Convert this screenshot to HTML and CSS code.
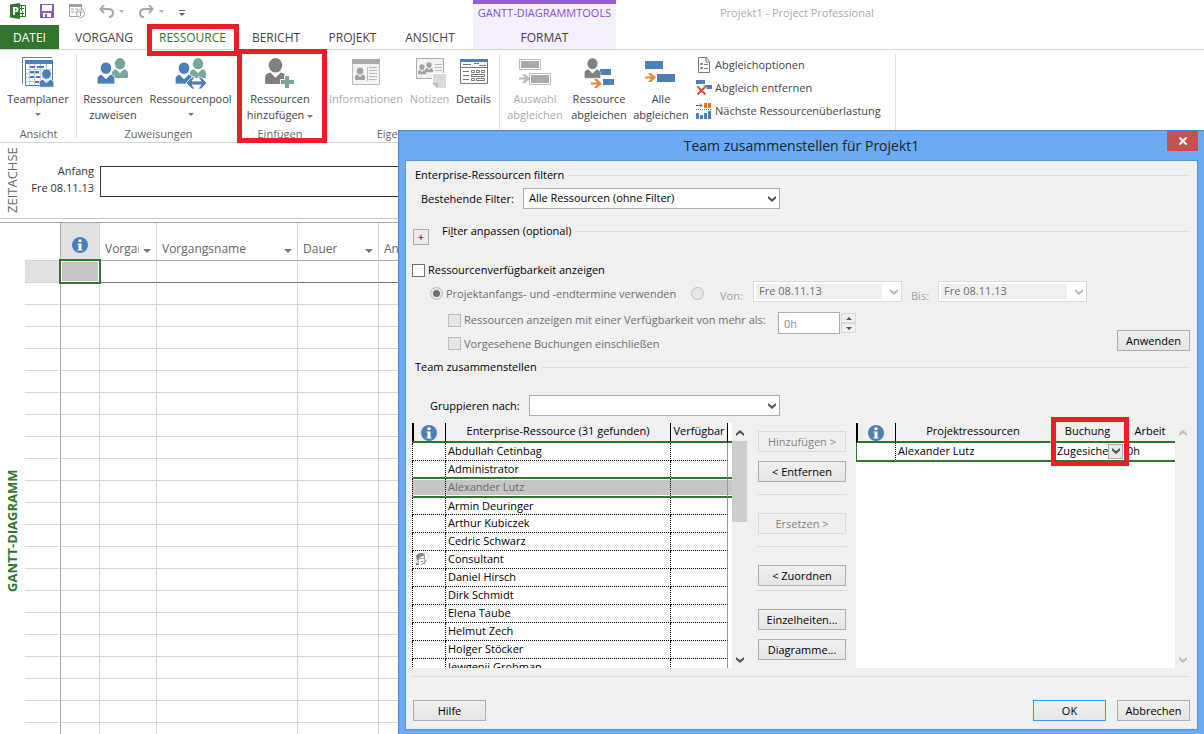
FILE: index.html
```html
<!DOCTYPE html>
<html lang="de">
<head>
<meta charset="utf-8">
<title>Projekt1 - Project Professional</title>
<link rel="stylesheet" href="styles.css">
</head>
<body>
<svg class="defs" aria-hidden="true">
  <symbol id="person" viewBox="0 0 20 26"><ellipse cx="10" cy="7" rx="6.500" ry="7"/><path d="M1 25q-1 0-1-2v-4q0-4 5-5l5 5 5-5q5 1 5 5v4q0 2-1 2z"/></symbol>
  <symbol id="chevron" viewBox="0 0 8 6"><path d="M0 0l4 3 4-3v2.500L4 6 0 2.500z"/></symbol>
  <symbol id="arrow" viewBox="0 0 11 9"><path d="M0 3.500h6L3 0h3l5 4.500L6 9H3l3-3.500H0z"/></symbol>
  <symbol id="info" viewBox="0 0 16 16"><circle cx="8" cy="8" r="8" fill="#4a7fb8"/><path fill="#fff" d="M6.500 2.500h3v2.500h-3zM5.500 6.500h4v6h1v1h-5v-1h1v-5h-1z"/></symbol>
</svg>
<div class="app">
  <header class="top">
    <div class="top-left">
      <div class="quick">
        <svg class="q-logo" viewBox="0 0 16 16"><path fill="#31752f" d="M0 1.500L10 0v16L0 14.500z"/><path fill="#fff" d="M3 4h3q2.500 0 2.500 2.500T6 9H5v3H3zm2 1.500v2h.700q1 0 1-1t-1-1z"/><path fill="none" stroke="#31752f" d="M10 2.500h5.500v11H10"/><path fill="#31752f" d="M10 5h4v1h-4zm0 5h4v1h-4zM11 3h1v5h-1zm1 5h1v5h-1z"/></svg>
        <svg class="q-save" viewBox="0 0 14 14"><path fill="#8a5bb8" fill-rule="evenodd" d="M0 0h14v14H0zM2 1v6h10V1zm1 8v4h2v-3h2v3h4V9z"/></svg>
        <svg class="q-pub" viewBox="0 0 16 14"><path fill="none" stroke="#a0a0a0" d="M8 12.500H.500V.500h12V6M2 5h3m-3 3h3m1-3h3m-3 3h2"/><path fill="#a0a0a0" d="M0 0h13v3H0z"/><circle cx="11.500" cy="9.500" r="4" fill="#fff" stroke="#a0a0a0"/><path fill="none" stroke="#a0a0a0" d="M11.500 12V7m-2 2l2-2 2 2"/></svg>
        <svg class="q-undo" viewBox="0 0 15 13"><path fill="none" stroke="#a6a6a6" stroke-width="2" d="M5 0L1.500 4 5 8M2 4h7q5 0 5 4t-4 4"/></svg>
        <svg class="q-tri" viewBox="0 0 5 3"><path fill="#b0b0b0" d="M0 0h5L2.500 3z"/></svg>
        <svg class="q-redo" viewBox="0 0 15 13"><path fill="none" stroke="#a6a6a6" stroke-width="2" d="M10 0l3.500 4L10 8m3-4H6q-5 0-5 4t4 4"/></svg>
        <svg class="q-tri" viewBox="0 0 5 3"><path fill="#b0b0b0" d="M0 0h5L2.500 3z"/></svg>
        <svg class="q-more" viewBox="0 0 6 6"><path fill="#666" d="M0 0h6v1H0zM0 3h6L3 6z"/></svg>
      </div>
      <nav class="tabs">
        <button class="tab tab-file">DATEI</button>
        <button class="tab tab-vorgang">VORGANG</button>
        <button class="tab tab-ressource">RESSOURCE<span class="mark mark-tab"></span></button>
        <button class="tab tab-bericht">BERICHT</button>
        <button class="tab tab-projekt">PROJEKT</button>
        <button class="tab tab-ansicht">ANSICHT</button>
      </nav>
    </div>
    <div class="context">
      <span class="context-title">GANTT-DIAGRAMMTOOLS</span>
      <button class="tab">FORMAT</button>
    </div>
    <div class="app-title">Projekt1 - Project Professional</div>
  </header>

  <section class="ribbon">
    <div class="group g-view">
      <div class="tools">
        <button class="tool t-76"><svg viewBox="0 0 32 32"><path fill="none" stroke="#777" d="M.500 27V.500H30"/><path fill="#fff" stroke="#4a7fb8" d="M3.500 3.500h27v25h-27z"/><path fill="#4a7fb8" d="M3 3h28v4H3z"/><path stroke="#b8cde4" d="M7.500 7v21m5-21v21m6-21v21m6-21v21M4 12.500h26M4 16.500h26M4 20.500h26M4 24.500h26"/><path fill="#8a5bb8" d="M8 9h5v2H8zm6 10h4v2h-4zm-1 5h5v2h-5z"/><path fill="#4a7fb8" d="M15 9h7v2h-7zM8 14h4v2H8zm5 0h4v2h-4zm-5 5h4v2H8z"/><use href="#person" x="17" y="12" width="15" height="19" fill="#4a7fb8" stroke="#fff"/></svg><span>Teamplaner</span><i class="drop"></i></button>
      </div>
      <div class="group-name">Ansicht</div>
    </div>
    <div class="group g-assign">
      <div class="tools">
        <button class="tool t-72"><svg viewBox="0 0 32 32"><use href="#person" x="15" y="1" width="16" height="21" fill="#77a895"/><use href="#person" x="0" y="5" width="18" height="23" fill="#4a7fb8" stroke="#fff"/></svg><span>Ressourcen<br>zuweisen</span></button>
        <button class="tool t-83"><svg viewBox="0 0 32 32"><use href="#person" x="15" y="1" width="16" height="21" fill="#77a895"/><use href="#person" x="0" y="5" width="18" height="23" fill="#4a7fb8" stroke="#fff"/><path fill="#4a7fb8" stroke="#fff" stroke-width=".8" d="M11 26l6-6h3l-3 4h9l-3-4h3l6 6-6 6h-3l3-4h-9l3 4h-3z"/></svg><span>Ressourcenpool</span><i class="drop"></i></button>
      </div>
      <div class="group-name">Zuweisungen</div>
    </div>
    <div class="group g-insert">
      <div class="tools">
        <button class="tool t-80"><svg viewBox="0 0 32 32"><use href="#person" x="1" y="1" width="21" height="27" fill="#7f7f7f"/><path fill="#77a895" stroke="#fff" d="M20.500 18.500h5v4h5v5h-5v4h-5v-4h-4v-5h4z"/></svg><span>Ressourcen<br>hinzufügen <i class="drop inline"></i></span></button>
      </div>
      <div class="group-name">Einfügen</div>
      <span class="mark mark-group"></span>
    </div>
    <div class="group g-props">
      <div class="tools">
        <button class="tool t-82" disabled><svg viewBox="0 0 32 32"><path fill="#f4f2f5" stroke="#bbb" d="M2.500 2.500h27v25h-27z"/><path fill="#aaa" d="M2 2h28v5H2z"/><use href="#person" x="5" y="10" width="10" height="14" fill="#a2a2a2"/><path stroke="#bbb" d="M17.500 10v14M19 10.500h8m-8 3h8m-8 3h8m-8 3h8m-8 3h8"/></svg><span>Informationen</span></button>
        <button class="tool t-45" disabled><svg viewBox="0 0 32 32"><path fill="#f4f2f5" stroke="#aaa" d="M2.500 1.500h27v20h-27z"/><use href="#person" x="4" y="7" width="8" height="11" fill="#a2a2a2"/><use href="#person" x="11" y="5" width="8" height="11" fill="#a2a2a2"/><path stroke="#bbb" d="M21 7.500h7m-7 3h7m-7 3h7"/><path fill="#ddd8df" stroke="#fff" d="M18.500 16.500h14v15h-9l-5-5z"/><path fill="#bbb" d="M18 26h6v6z"/></svg><span>Notizen</span></button>
        <button class="tool t-43"><svg viewBox="0 0 32 32"><path fill="#fff" stroke="#777" d="M2.500 2.500h27v24h-27z"/><path fill="#4a7fb8" d="M2 2h28v3H2z"/><path stroke="#777" fill="none" d="M5 7.500h8M3 10.500h26M5 14.500h6m-6 4h6m-6 4h6M13.500 13.500h3v2h-3zm5 0h3v2h-3zm5 0h3v2h-3zm-10 4h13v2h-13zm0 4h3v2h-3zm5 0h8v2h-8z"/><path stroke="#4a7fb8" d="M16 6.500h5m0 2h7"/></svg><span>Details</span></button>
      </div>
      <div class="group-name">Eigenschaften</div>
    </div>
    <div class="group g-level">
      <div class="tools">
        <button class="tool t-66" disabled><svg viewBox="0 0 32 32"><path fill="#fff" stroke="#bbb" d="M.500 2.500h21v10H.500zm10 14h21v11h-21z"/><path fill="#aaa" d="M2 4h18v7H2zm10 14h18v8H12z"/><use href="#arrow" y="17" width="11" height="9" fill="#bbb"/></svg><span>Auswahl<br>abgleichen</span></button>
        <button class="tool t-62"><svg viewBox="0 0 32 32"><path fill="#4a7fb8" d="M17 12h11v6H17zm3 10h11v6H20z"/><use href="#person" x="0" y="1" width="19" height="21" fill="#7f7f7f" stroke="#fff" stroke-width=".5"/><use href="#arrow" x="8" y="22" width="11" height="9" fill="#e8883a"/></svg><span>Ressource<br>abgleichen</span></button>
        <button class="tool t-62"><svg viewBox="0 0 32 32"><path fill="#4a7fb8" d="M0 4h18v8H0zm12 13h18v8H12z"/><use href="#arrow" y="16" width="11" height="9" fill="#e8883a"/></svg><span>Alle<br>abgleichen</span></button>
        <div class="small-tools">
          <button class="small"><svg viewBox="0 0 16 16"><path fill="#fff" stroke="#777" d="M2.500.500h8l3 4v11h-11zM10 .500V5h3.500"/><path fill="none" stroke="#777" d="M4.500 6.500h2v1h-2zm0 4h2v1h-2zM8 7.500h4M8 11.500h4"/></svg>Abgleichoptionen</button>
          <button class="small"><svg viewBox="0 0 16 16"><path fill="#4a7fb8" d="M0 0h9v4H0zm7 5h9v4H7z"/><path stroke="#fff" stroke-width="4" d="M1.500 6.500l8 8m0-8l-8 8"/><path stroke="#d9532c" stroke-width="2" d="M1.500 6.500l8 8m0-8l-8 8"/></svg>Abgleich entfernen</button>
          <button class="small"><svg viewBox="0 0 16 16"><path fill="#e8751a" d="M8 0h3v5H8zm4 0h3v5h-3z"/><path fill="none" stroke="#666" d="M0 2.500h6M4 .500l2 2-2 2"/><path stroke="#666" stroke-dasharray="1 1" d="M0 6.500h16"/><path fill="#4a7fb8" d="M0 10h3v6H0zm4 2h3v4H4zm4-2h3v6H8zm4-2h3v8h-3z"/></svg>Nächste Ressourcenüberlastung</button>
        </div>
      </div>
    </div>
  </section>

  <section class="timeline">
    <div class="side-label">ZEITACHSE</div>
    <div class="tl-start">Anfang<br>Fre 08.11.13</div>
    <div class="tl-bar"></div>
  </section>

  <section class="gantt">
    <div class="side-label side-active">GANTT-DIAGRAMM</div>
    <table class="sheet">
      <colgroup><col class="s-row"><col class="s-info"><col class="s-mode"><col class="s-name"><col class="s-dur"><col></colgroup>
      <thead><tr><th></th><th class="th-info"><svg class="info"><use href="#info"/></svg></th><th><span class="th"><span>Vorgangsmodus</span><i class="drop"></i></span></th><th><span class="th"><span>Vorgangsname</span><i class="drop"></i></span></th><th><span class="th"><span>Dauer</span><i class="drop"></i></span></th><th><span class="th"><span>Anfang</span></span></th></tr></thead>
      <tbody>
        <tr class="current"><td></td><td><span class="cursor"></span></td><td></td><td></td><td></td><td></td></tr>
        <tr><td></td><td></td><td></td><td></td><td></td><td></td></tr>
        <tr><td></td><td></td><td></td><td></td><td></td><td></td></tr>
        <tr><td></td><td></td><td></td><td></td><td></td><td></td></tr>
        <tr><td></td><td></td><td></td><td></td><td></td><td></td></tr>
        <tr><td></td><td></td><td></td><td></td><td></td><td></td></tr>
        <tr><td></td><td></td><td></td><td></td><td></td><td></td></tr>
        <tr><td></td><td></td><td></td><td></td><td></td><td></td></tr>
        <tr><td></td><td></td><td></td><td></td><td></td><td></td></tr>
        <tr><td></td><td></td><td></td><td></td><td></td><td></td></tr>
        <tr><td></td><td></td><td></td><td></td><td></td><td></td></tr>
        <tr><td></td><td></td><td></td><td></td><td></td><td></td></tr>
        <tr><td></td><td></td><td></td><td></td><td></td><td></td></tr>
        <tr><td></td><td></td><td></td><td></td><td></td><td></td></tr>
        <tr><td></td><td></td><td></td><td></td><td></td><td></td></tr>
        <tr><td></td><td></td><td></td><td></td><td></td><td></td></tr>
        <tr><td></td><td></td><td></td><td></td><td></td><td></td></tr>
        <tr><td></td><td></td><td></td><td></td><td></td><td></td></tr>
        <tr><td></td><td></td><td></td><td></td><td></td><td></td></tr>
        <tr><td></td><td></td><td></td><td></td><td></td><td></td></tr>
        <tr><td></td><td></td><td></td><td></td><td></td><td></td></tr>
        <tr><td></td><td></td><td></td><td></td><td></td><td></td></tr>
      </tbody>
    </table>
  </section>

  <div class="dialog" role="dialog" aria-labelledby="dlg-title">
    <div class="dlg-bar">
      <h1 id="dlg-title">Team zusammenstellen für Projekt1</h1>
      <button class="close" aria-label="Schließen"><svg viewBox="0 0 8 8"><path stroke="#fff" stroke-width="2" d="M.500.500l7 7m0-7l-7 7"/></svg></button>
    </div>
    <div class="client">
      <div class="legend">Enterprise-Ressourcen filtern</div>
      <div class="row filter-row">
        <label for="filter">Bestehende Filter:</label>
        <span class="combo c-filter"><select id="filter"><option>Alle Ressourcen (ohne Filter)</option></select><svg><use href="#chevron"/></svg></span>
      </div>
      <div class="optional">
        <button class="plus" aria-label="Filter anpassen">+</button>
        <div class="legend">Fi<u>l</u>ter anpassen (optional)</div>
      </div>
      <div class="avail">
        <div class="avail-rows">
          <div class="row check-row"><input type="checkbox" id="avail"><label for="avail">Ressourcenverfügbarkeit anzeigen</label></div>
          <div class="row dates">
            <input type="radio" name="span" id="span-project" checked disabled><label class="l-span" for="span-project">Projektanfangs- und -endtermine verwenden</label>
            <input type="radio" name="span" id="span-own" aria-label="Zeitraum" disabled>
            <label class="l-date l-from" for="from">Von:</label>
            <span class="combo c-date"><select id="from" disabled><option>Fre 08.11.13</option></select><svg><use href="#chevron"/></svg></span>
            <label class="l-date l-to" for="to">Bis:</label>
            <span class="combo c-date"><select id="to" disabled><option>Fre 08.11.13</option></select><svg><use href="#chevron"/></svg></span>
          </div>
          <div class="row more">
            <input type="checkbox" id="min" disabled><label class="l-min" for="min">Ressourcen anzeigen mit einer Verfügbarkeit von mehr als:</label>
            <input class="hours" type="text" value="0h" aria-label="Stunden" disabled>
            <span class="spin"><button disabled aria-label="Mehr"><i class="tri up"></i></button><button disabled aria-label="Weniger"><i class="tri"></i></button></span>
          </div>
          <div class="row proposed"><input type="checkbox" id="prop" disabled><label for="prop">Vorgesehene Buchungen einschließen</label></div>
        </div>
        <button class="btn b-73">Anwenden</button>
      </div>
      <div class="legend l-team">Team zusammenstellen</div>
      <div class="row group-row">
        <label for="group">Gruppieren nach:</label>
        <span class="combo c-group"><select id="group"><option></option></select><svg><use href="#chevron"/></svg></span>
      </div>
      <div class="lists">
        <div class="list l-left">
          <table class="grid">
            <colgroup><col class="c-33"><col class="c-225"><col class="c-57"><col></colgroup>
            <thead><tr><th><svg class="info"><use href="#info"/></svg></th><th>Enterprise-Ressource (31 gefunden)</th><th>Verfügbar</th><th class="edge"></th></tr></thead>
            <tbody>
              <tr><td></td><td>Abdullah Cetinbag</td><td></td><td></td></tr>
              <tr class="before"><td></td><td>Administrator</td><td></td><td></td></tr>
              <tr class="picked"><td></td><td>Alexander Lutz</td><td></td><td></td></tr>
              <tr class="after"><td></td><td>Armin Deuringer</td><td></td><td></td></tr>
              <tr><td></td><td>Arthur Kubiczek</td><td></td><td></td></tr>
              <tr><td></td><td>Cedric Schwarz</td><td></td><td></td></tr>
              <tr><td><svg class="generic" viewBox="0 0 14 14"><path fill="none" stroke="#bbb" stroke-dasharray="2 1" d="M8 1.500q4-2 5 1 1 3-1 5l-1 3-2 1"/><path fill="#888" d="M1 4q1-3 5-3 4 0 4 3L8 4 5 5 4 8 2 9z"/><path fill="none" stroke="#999" d="M9.500 4v3l1 2h-1v2.500H7V13M3.500 9v4"/><path fill="#888" d="M5 6h2v1H5zm3 0h1v1H8zM6 9h2v1H6zM1 11h2v2H1z"/></svg></td><td>Consultant</td><td></td><td></td></tr>
              <tr><td></td><td>Daniel Hirsch</td><td></td><td></td></tr>
              <tr><td></td><td>Dirk Schmidt</td><td></td><td></td></tr>
              <tr><td></td><td>Elena Taube</td><td></td><td></td></tr>
              <tr><td></td><td>Helmut Zech</td><td></td><td></td></tr>
              <tr><td></td><td>Holger Stöcker</td><td></td><td></td></tr>
              <tr><td></td><td>Jewgenij Grohman</td><td></td><td></td></tr>
            </tbody>
          </table>
        </div>
        <div class="scroll"><svg class="up"><use href="#chevron"/></svg><div class="track"><div class="thumb"></div></div><svg><use href="#chevron"/></svg></div>
        <div class="actions">
          <button class="btn" disabled>Hinzufügen &gt;</button>
          <button class="btn">&lt; Entfernen</button>
          <hr>
          <button class="btn wide" disabled>Ersetzen &gt;</button>
          <hr>
          <button class="btn wide">&lt; Zuordnen</button>
          <hr class="tight">
          <button class="btn wide">Einzelheiten...</button>
          <button class="btn">Diagramme...</button>
        </div>
        <div class="list l-right">
          <table class="grid grid-right">
            <colgroup><col class="c-39"><col class="c-156"><col class="c-73"><col></colgroup>
            <thead><tr><th><svg class="info"><use href="#info"/></svg></th><th>Projektressourcen</th><th>Buchung</th><th>Arbeit</th></tr></thead>
            <tbody><tr><td></td><td>Alexander Lutz</td><td><span class="booking"><span>Zugesichert</span><button aria-label="Buchung wählen"><svg><use href="#chevron"/></svg></button></span></td><td>0h</td></tr></tbody>
          </table>
          <span class="mark mark-booking"></span>
        </div>
        <div class="scroll idle"><svg class="up"><use href="#chevron"/></svg><div class="track"></div><svg><use href="#chevron"/></svg></div>
      </div>
      <hr class="foot-line">
      <div class="footer">
        <button class="btn b-73">Hilfe</button>
        <button class="btn b-73 ok">OK</button>
        <button class="btn b-73">Abbrechen</button>
      </div>
    </div>
  </div>
</div>
</body>
</html>
```
FILE: styles.css
```css
* { box-sizing: border-box; }
body { margin: 0; font: 12px/16px "Open Sans", "Noto Sans", sans-serif; color: #444; background: #fff; }
button { font: inherit; color: inherit; background: none; border: 0; padding: 0; }
svg { display: block; flex: none; }
.defs { position: absolute; width: 0; height: 0; }
.app { position: relative; display: flex; flex-direction: column; height: 100vh; min-height: 640px; overflow: hidden; }
.drop { display: block; width: 0; height: 0; border: 3px solid transparent; border-top-color: #777; border-bottom: 0; }
.mark { position: absolute; z-index: 2; border: 5px solid #ee1c25; pointer-events: none; }

/* title bar and tabs */
.top { display: flex; border-bottom: 1px solid #d4d4d4; }
.top-left { width: 473px; }
.quick { display: flex; align-items: center; height: 25px; padding: 0 0 3px 10px; }
.q-logo { width: 16px; height: 16px; margin-right: 14px; }
.q-save { width: 14px; height: 14px; margin-right: 15px; }
.q-pub { width: 16px; height: 14px; margin-right: 14px; }
.q-undo, .q-redo { width: 15px; height: 13px; margin-right: 5px; }
.q-tri { width: 5px; height: 3px; margin-right: 15px; }
.q-more { width: 6px; height: 6px; margin-top: 3px; }
.tabs { display: flex; }
.tab { position: relative; height: 24px; padding-top: 2px; text-align: center; }
.tab-file { width: 59px; background: #31752f; color: #fff; }
.tab-vorgang { width: 90px; }
.tab-ressource { width: 87px; color: #31752f; }
.tab-bericht { width: 80px; }
.tab-projekt { width: 73px; }
.tab-ansicht { width: 82px; }
.mark-tab { inset: -1px -3px -7px -2px; }
.context { display: flex; flex-direction: column; align-items: center; width: 143px; background: #f5effc; border-top: 4px solid #925fd6; color: #444; }
.context-title { height: 21px; line-height: 18px; font-size: 11px; color: #8a4fd0; }
.app-title { padding: 5px 0 0 104px; color: #aaa; font-size: 11px; }

/* ribbon */
.ribbon { display: flex; height: 93px; border-bottom: 1px solid #d4d4d4; font-size: 11px; }
.group { position: relative; display: flex; flex-direction: column; padding-top: 7px; }
.group::after { content: ""; position: absolute; right: 0; top: 4px; bottom: 4px; width: 1px; background: #e1e1e1; }
.g-view { width: 77px; }
.g-assign { width: 163px; }
.g-insert { width: 85px; }
.g-props { width: 175px; }
.g-level { width: 396px; padding-left: 2px; }
.tools { display: flex; flex: 1; }
.tool { display: flex; flex-direction: column; align-items: center; justify-content: flex-start; white-space: nowrap; }
.tool > svg { width: 32px; height: 32px; margin-bottom: 2px; }
.tool > .drop { margin-top: 6px; }
.tool:disabled { color: #aaa; }
.drop.inline { display: inline-block; vertical-align: middle; }
.t-43 { width: 43px; } .t-45 { width: 45px; } .t-62 { width: 62px; } .t-66 { width: 66px; } .t-72 { width: 72px; }
.t-76 { width: 76px; } .t-80 { width: 80px; } .t-82 { width: 82px; } .t-83 { width: 83px; }
.group-name { height: 16px; text-align: center; color: #666; }
.g-insert .group-name { padding-right: 5px; }
.mark-group { inset: -1px -2px -1px -3px; }
.small-tools { display: flex; flex-direction: column; gap: 7px; padding-left: 4px; }
.small { display: flex; align-items: center; gap: 3px; height: 16px; white-space: nowrap; }
.small svg { width: 16px; height: 16px; }

/* timeline */
.timeline { display: flex; height: 76px; border-bottom: 1px solid #c8c8c8; }
.side-label { width: 25px; flex: none; writing-mode: vertical-rl; transform: rotate(180deg); text-align: center; font-size: 13px; line-height: 25px; color: #666; }
.tl-start { width: 75px; padding: 19px 6px 0 0; text-align: right; font-size: 11px; line-height: 17px; color: #333; white-space: nowrap; }
.tl-bar { flex: 1; height: 31px; margin-top: 23px; border: 1px solid #333; }

/* task sheet */
.gantt { display: flex; flex: 1; min-height: 0; margin-top: 3px; border-top: 1px solid #aaa; overflow: hidden; }
.side-active { font-weight: bold; color: #31752f; height: 512px; margin-top: 52px; align-self: flex-start; }
.sheet { flex: 1; table-layout: fixed; border-collapse: separate; border-spacing: 0; width: 100%; align-self: flex-start; }
.s-row { width: 36px; } .s-info { width: 39px; } .s-mode { width: 57px; } .s-name { width: 141px; } .s-dur { width: 81px; }
.sheet th { height: 38px; padding: 0 5px 3px 5px; vertical-align: bottom; text-align: left; font-weight: normal; color: #666; border-right: 1px solid #d4d4d4; border-bottom: 1px solid #aaa; }
.sheet .th-info { background: #e1e1e1; padding: 0 0 7px 11px; }
.info { width: 16px; height: 16px; }
.th { display: flex; align-items: center; justify-content: space-between; gap: 4px; }
.th > span { overflow: hidden; white-space: nowrap; }
.th .drop { border-width: 4px 4px 0; flex: none; margin-top: 3px; }
.sheet td { height: 22px; padding: 0; border-right: 1px solid #d4d4d4; border-bottom: 1px solid #d8d8d8; }
.sheet th:first-child { border-right-color: #aaa; border-bottom-color: #d4d4d4; }
.sheet td:first-child { border-right-color: #aaa; }
.sheet .current td { border-bottom-color: #777; position: relative; }
.sheet .current td:first-child { background: #e1e1e1; border-bottom-color: #d4d4d4; }
.cursor { position: absolute; z-index: 1; inset: -2px; border: 2px solid #31752f; background: #c6c6c6; box-shadow: inset 0 0 0 1px #fff; }

/* dialog window */
.dialog { position: absolute; z-index: 3; inset: 130px 0 0 398px; display: flex; flex-direction: column; padding: 0 6px 4px; background: #6babf6; border: solid #4f86c0; border-width: 1px 0 0 1px; color: #000; font-size: 11px; }
.dlg-bar { position: relative; display: flex; justify-content: center; height: 29px; }
.dlg-bar h1 { margin: 0; font-size: 14px; font-weight: normal; line-height: 30px; color: #222; }
.close { position: absolute; right: 0; top: 0; width: 31px; height: 20px; display: flex; align-items: center; justify-content: center; background: #c75050; }
.close svg { width: 8px; height: 8px; }
.client { display: flex; flex-direction: column; flex: 1; min-height: 0; padding: 6px 7px 8px 6px; background: #f0f0f0; border: 1px solid #5a92d2; }
.legend { display: flex; align-items: center; height: 16px; padding-left: 3px; white-space: pre; }
.legend::after { content: ""; flex: 1; height: 1px; margin-left: 4px; background: #dcdcdc; }
.row { display: flex; align-items: center; white-space: nowrap; }
.filter-row { margin-top: 5px; padding-left: 9px; }
.filter-row label { width: 102px; }
.combo { position: relative; display: block; height: 21px; }
.combo select { display: block; appearance: none; width: 100%; height: 21px; padding: 0 5px 2px; font: inherit; color: #000; background: #fff; border: 1px solid #abadb3; border-radius: 0; }
.combo svg { position: absolute; right: 4px; top: 8px; width: 8px; height: 6px; fill: #555; }
.combo select:disabled { color: #6d6d6d; opacity: 1; border-color: #d9d9d9; background: linear-gradient(#f0f0f0, #f0f0f0) 2px 2px / 126px 15px no-repeat #fff; }
.combo select:disabled + svg { fill: #bbb; }
.c-filter { width: 257px; }
.c-date { width: 149px; }
.c-group { width: 251px; }
.optional { display: flex; margin-top: 14px; height: 23px; }
.plus { width: 16px; height: 16px; margin: 6px 10px 0 1px; border: 1px solid #abadb3; background: #ececec; line-height: 14px; }
.optional .legend { flex: 1; }
.avail { display: flex; justify-content: space-between; align-items: flex-end; margin-top: 16px; }
input { margin: 0; flex: none; }
input[type=checkbox], input[type=radio] { appearance: none; width: 13px; height: 13px; border: 1px solid #707070; background: #fff; }
input[type=radio] { border-radius: 50%; margin-bottom: 2px; }
input[type=checkbox]:disabled, input[type=radio]:disabled { border-color: #bcbcbc; background: #e6e6e6; }
input[type=radio]:checked:disabled { background: radial-gradient(#707070 3px, #e6e6e6 4px); }
input:disabled + label { color: #6d6d6d; }
.row > input + label { margin-left: 3px; }
.check-row { height: 16px; }
.dates { align-items: flex-end; height: 21px; margin-top: 3px; padding-left: 18px; }
.l-span { width: 245px; }
.row > .l-date { color: #a0a0a0; line-height: 12px; }
.row > .l-from { width: 33px; margin-left: 16px; }
.l-to { width: 27px; margin-left: 9px; }
.more { align-items: flex-start; height: 22px; margin-top: 10px; padding-left: 36px; }
.more input[type=checkbox] { margin-top: 2px; }
.l-min { width: 314px; }
.hours { width: 62px; height: 22px; padding: 0 5px; border: 1px solid #abadb3; background: #fff; font: inherit; color: #888; }
.spin { display: flex; flex-direction: column; margin: 1px 0 0 1px; }
.spin button { display: flex; align-items: center; justify-content: center; width: 15px; height: 10px; border: 1px solid #d9d9d9; }
.tri { width: 0; height: 0; border: solid transparent; border-width: 3px 3px 0; border-top-color: #555; }
.tri.up { border-width: 0 3px 3px; border-bottom-color: #555; }
.proposed { height: 15px; margin-top: 2px; padding-left: 36px; }
.btn { height: 21px; border: 1px solid #acacac; background: linear-gradient(#f0f0f0, #e5e5e5); text-align: center; line-height: 19px; }
.btn:disabled { border-color: #d9d9d9; background: #efefef; color: #838383; }
.b-73 { width: 73px; }
.l-team { margin-top: 8px; }
.group-row { margin-top: 20px; padding-left: 18px; }
.group-row label { width: 99px; }

/* resource lists */
.lists { display: flex; flex: 1; min-height: 0; margin-top: 7px; }
.list { position: relative; background: #fff; }
.l-left { width: 320px; overflow: hidden; }
.l-right { flex: 1; }
.grid { width: 100%; table-layout: fixed; border-collapse: separate; border-spacing: 0; }
.c-33 { width: 34px; } .c-225 { width: 225px; } .c-57 { width: 57px; } .c-39 { width: 40px; } .c-156 { width: 155px; } .c-73 { width: 74px; }
.grid th { height: 20px; padding: 0; font-weight: normal; text-align: center; vertical-align: top; background: #f0f0f0; border-bottom: 2px solid #31752f; border-right: 1px solid #000; white-space: nowrap; }
.grid th:first-child { border-left: 2px solid #000; }
.grid th:last-child { border-right: 0; }
.grid .edge { background: #fff; }
.grid th .info { margin: 2px 0 0 7px; }
.grid-right th .info { margin-left: 10px; }
.grid td { height: 18px; padding: 0 2px; line-height: 16px; vertical-align: top; overflow: hidden; white-space: nowrap; border-right: 1px dotted #000; border-bottom: 1px dotted #000; }
.grid td:first-child { border-left: 1px dotted #000; }
.grid td:nth-child(3) { border-right: 1px solid #999; }
.grid td:last-child { border: 0; }
.grid .before td { border-bottom: 2px solid #31752f; }
.grid .picked td { height: 19px; background: #c6c6c6; color: #666; border-bottom: 2px solid #31752f; box-shadow: inset 0 1px #fff, inset 0 -1px #fff; }
.grid .after td { height: 17px; line-height: 15px; }
.generic { width: 14px; height: 14px; margin-top: 1px; }
.grid-right tbody td { height: 19px; border-right: 0; border-bottom: 2px solid #31752f; }
.grid-right tbody td:first-child { border-left: 1px solid #31752f; border-right: 1px dotted #000; }
.grid-right tbody td:nth-child(3) { border-right: 1px dotted #000; padding-right: 0; }
.grid-right tbody td:last-child { border-bottom: 2px solid #31752f; }
.grid-right thead th:nth-child(2) { border-right-color: transparent; }
.booking { display: flex; align-items: center; }
.booking > span { flex: 1; overflow: hidden; padding-left: 4px; }
.booking button { display: flex; align-items: center; justify-content: center; width: 15px; height: 15px; margin-right: 1px; border: 1px solid #acacac; background: #e8e8e8; flex: none; }
.booking svg { width: 8px; height: 6px; fill: #555; }
.mark-booking { left: 195px; top: -6px; width: 78px; height: 49px; }
.scroll { display: flex; flex-direction: column; align-items: center; width: 15px; padding: 7px 0 5px; fill: #555; }
.scroll > svg { width: 8px; height: 6px; }
.scroll .up { transform: scaleY(-1); }
.track { flex: 1; width: 15px; padding-top: 5px; }
.thumb { height: 81px; background: #cdcdcd; }
.idle { fill: #bbb; }
.actions { display: flex; flex-direction: column; width: 90px; margin: 8px 9px 0 10px; }
.actions .btn { margin: 0 1px 9px; flex: none; }
.actions hr { width: 100%; height: 1px; margin: 3px 0 0; border: 0; background: #dcdcdc; flex: none; }
.actions .wide { margin-top: 18px; }
.actions hr.tight { margin-top: -5px; }
.foot-line { width: 100%; height: 1px; margin: 8px 0 23px; border: 0; background: #dcdcdc; flex: none; }
.footer { display: flex; gap: 11px; padding-left: 1px; }
.footer .ok { margin-left: auto; border-color: #3399ff; }
```
